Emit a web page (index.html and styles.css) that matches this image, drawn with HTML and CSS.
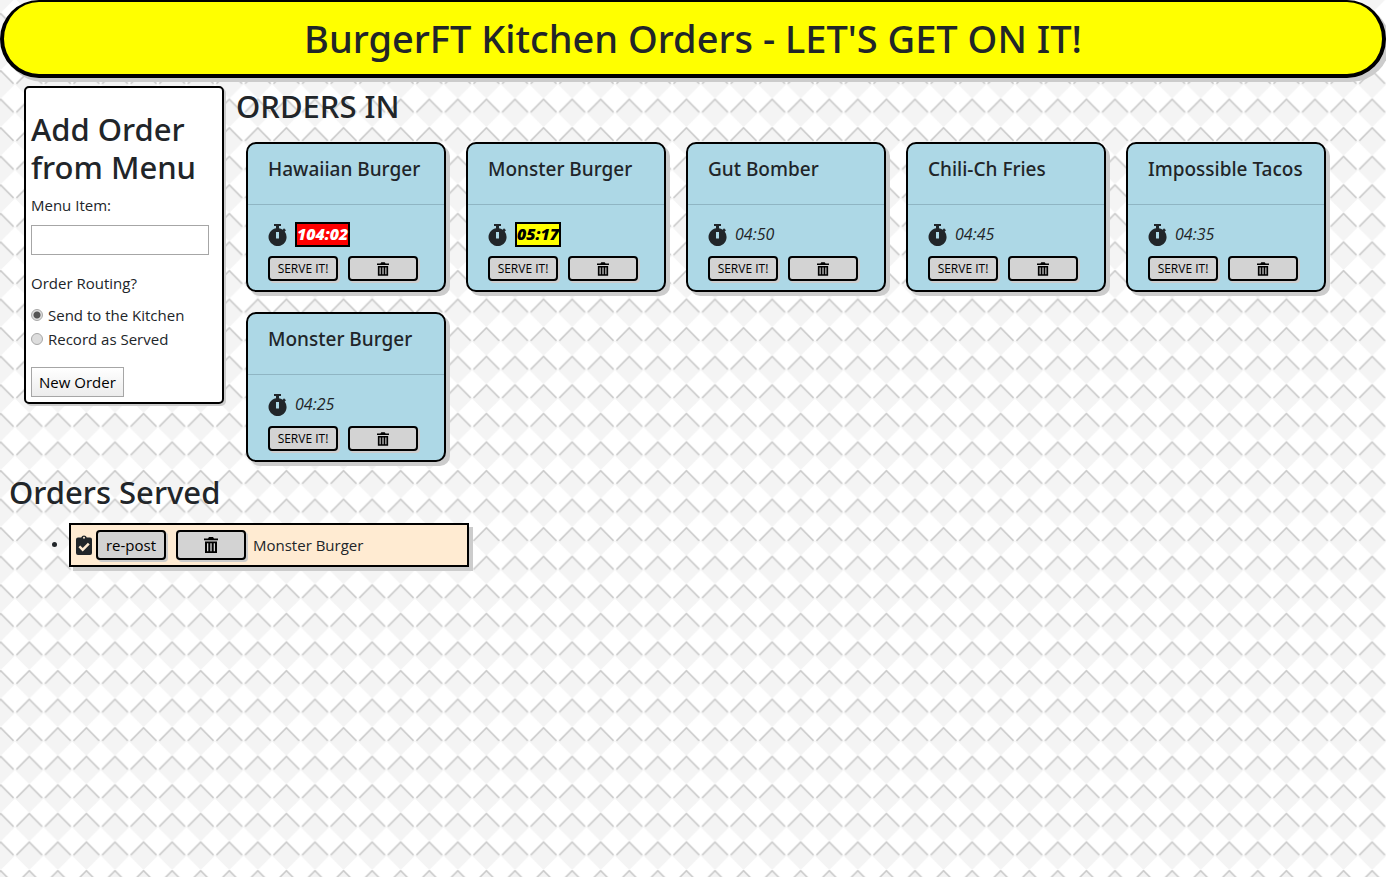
FILE: index.html
```html
<!DOCTYPE html>
<html lang="en">
<head>
<meta charset="utf-8">
<title>BurgerFT Kitchen Orders</title>
<link rel="stylesheet" href="styles.css">
</head>
<body>
<svg class="sprite" aria-hidden="true">
  <symbol id="timer" viewBox="0 0 19 22"><path fill="currentColor" fill-rule="evenodd" d="M6 0h7v2h-2v2.200a9 9 0 0 1 3.700 1.500l1.300-1.500 2 2-1.300 1.400A9 9 0 1 1 8 4.200V2H6zM8 8v6.500h3V8z"/></symbol>
  <symbol id="trash" viewBox="0 0 14 16"><path fill="currentColor" fill-rule="evenodd" d="M0 1.500h4L5 0h4l1 1.500h4v1.800H0zM1 4.500h12V16H1zM3 6.300v7.900h1.300V6.300zM6.300 6.300v7.900h1.400V6.300zM9.700 6.300v7.900H11V6.300z"/></symbol>
  <symbol id="clipboard" viewBox="0 0 16 20"><path fill="currentColor" fill-rule="evenodd" d="M2 2.500h3.200a3 3 0 0 1 5.600 0H14a2 2 0 0 1 2 2V18a2 2 0 0 1-2 2H2a2 2 0 0 1-2-2V4.500a2 2 0 0 1 2-2zM8 1.700a1 1 0 1 0 0 2 1 1 0 0 0 0-2zM4.200 10.500l-1.700 1.800 4.200 4.100 7-6.900-1.800-1.800-5.200 5.200z"/></symbol>
</svg>
<header class="banner"><h1>BurgerFT Kitchen Orders - LET'S GET ON IT!</h1></header>
<main class="kitchen">
  <form class="order-form">
    <h2>Add Order from Menu</h2>
    <label class="field-label" for="item">Menu Item:</label>
    <input class="item-input" id="item" type="text">
    <fieldset class="routing">
      <legend>Order Routing?</legend>
      <label><input type="radio" name="route" checked>Send to the Kitchen</label>
      <label><input type="radio" name="route">Record as Served</label>
    </fieldset>
    <button class="new-order" type="button">New Order</button>
  </form>
  <section class="orders-in">
    <h2>ORDERS IN</h2>
    <div class="cards">
      <article class="card"><h3>Hawaiian Burger</h3><div class="card-body"><p class="clock"><svg class="timer"><use href="#timer"/></svg><em class="late">104:02</em></p><div class="actions"><button type="button">SERVE IT!</button><button type="button" aria-label="Delete"><svg class="trash"><use href="#trash"/></svg></button></div></div></article>
      <article class="card"><h3>Monster Burger</h3><div class="card-body"><p class="clock"><svg class="timer"><use href="#timer"/></svg><em class="warn">05:17</em></p><div class="actions"><button type="button">SERVE IT!</button><button type="button" aria-label="Delete"><svg class="trash"><use href="#trash"/></svg></button></div></div></article>
      <article class="card"><h3>Gut Bomber</h3><div class="card-body"><p class="clock"><svg class="timer"><use href="#timer"/></svg><em>04:50</em></p><div class="actions"><button type="button">SERVE IT!</button><button type="button" aria-label="Delete"><svg class="trash"><use href="#trash"/></svg></button></div></div></article>
      <article class="card"><h3>Chili-Ch Fries</h3><div class="card-body"><p class="clock"><svg class="timer"><use href="#timer"/></svg><em>04:45</em></p><div class="actions"><button type="button">SERVE IT!</button><button type="button" aria-label="Delete"><svg class="trash"><use href="#trash"/></svg></button></div></div></article>
      <article class="card"><h3>Impossible Tacos</h3><div class="card-body"><p class="clock"><svg class="timer"><use href="#timer"/></svg><em>04:35</em></p><div class="actions"><button type="button">SERVE IT!</button><button type="button" aria-label="Delete"><svg class="trash"><use href="#trash"/></svg></button></div></div></article>
      <article class="card"><h3>Monster Burger</h3><div class="card-body"><p class="clock"><svg class="timer"><use href="#timer"/></svg><em>04:25</em></p><div class="actions"><button type="button">SERVE IT!</button><button type="button" aria-label="Delete"><svg class="trash"><use href="#trash"/></svg></button></div></div></article>
    </div>
  </section>
</main>
<section class="served">
  <h2>Orders Served</h2>
  <ul>
    <li><div class="served-row"><svg class="clipboard"><use href="#clipboard"/></svg><div class="actions large"><button type="button">re-post</button><button type="button" aria-label="Delete"><svg class="trash"><use href="#trash"/></svg></button></div><span>Monster Burger</span></div></li>
  </ul>
</section>
</body>
</html>
```
FILE: styles.css
```css
* { box-sizing: border-box; }
body {
  margin: 0;
  min-height: 100vh;
  color: #212529;
  font: 15px/24px "Open Sans", "Noto Sans", sans-serif;
  background: #fff url("data:image/svg+xml,%3Csvg xmlns='http://www.w3.org/2000/svg' width='200' height='200' viewBox='0 0 280 280'%3E%3Cpattern id='p' x='-19' y='18' width='40' height='40' patternUnits='userSpaceOnUse'%3E%3Cpath d='M20 0L40 20L20 40L0 20Z' fill='%23f4f4f4'/%3E%3Cpath d='M2 19L20 1L38 19' fill='none' stroke='%23cccccc' stroke-width='2.400'/%3E%3C/pattern%3E%3Crect width='280' height='280' fill='url(%23p)'/%3E%3C/svg%3E");
}
h1, h2, h3, p, ul { margin: 0; }
h1, h2, h3 { font-family: "Noto Sans", "Open Sans", sans-serif; font-weight: 500; }
h2 { font-size: 31px; line-height: 38px; }
button, input { font: inherit; color: #000; }
.sprite { display: none; }
.banner {
  padding: 12px 16px;
  background: #ff0;
  border: solid #000;
  border-width: 2px 4px 4px;
  border-radius: 40px;
  box-shadow: 4px 4px #ccc;
  text-align: center;
}
.banner h1 { font-size: 38px; line-height: 48px; }
.kitchen { display: flex; align-items: flex-start; padding: 8px 0 0 24px; gap: 12px; }
.order-form {
  flex: none;
  width: 200px;
  padding: 22px 5px 5px;
  background: #fff;
  border: 2px solid #000;
  border-radius: 5px;
  box-shadow: 2px 2px #ccc;
}
.field-label { display: block; margin: 7px 0 8px; }
.item-input { display: block; width: 178px; height: 30px; padding: 2px; border: 1px solid #a6a6a6; }
.routing { margin: 0; padding: 8px 0 0; border: 0; }
.routing legend { padding: 16px 0 0; }
.routing label { display: flex; align-items: center; gap: 5px; }
.routing input {
  appearance: none;
  width: 12px;
  height: 12px;
  margin: 0;
  border: 1px solid #a8a8a8;
  border-radius: 50%;
  background: #ddd;
}
.routing input:checked { background: radial-gradient(#555 0 3px, #ddd 4px); }
.new-order {
  display: block;
  height: 30px;
  margin-top: 16px;
  padding: 0 7px;
  background: linear-gradient(#fff, #ececec);
  border: 1px solid #a6a6a6;
}
.orders-in { flex: 1; padding-top: 1px; }
.cards { display: flex; flex-wrap: wrap; gap: 20px; padding: 17px 10px 0; }
.card {
  width: 200px;
  background: #add8e6;
  border: 2px solid #000;
  border-radius: 10px;
  box-shadow: 4px 4px #ccc;
}
.card h3 {
  padding: 13px 20px 23px;
  font-size: 19px;
  line-height: 24px;
  white-space: nowrap;
  border-bottom: 1px solid #8fb5c3;
}
.card-body { padding: 17px 20px 9px; }
.clock { display: flex; align-items: center; gap: 8px; height: 25px; font-size: 16px; }
.clock em { line-height: 21px; }
.late, .warn { border: 2px solid #000; font-weight: 800; }
.late { background: #f00; color: #fff; }
.warn { background: #ff0; color: #000; }
.timer { width: 19px; height: 22px; }
.actions { display: flex; gap: 10px; margin-top: 9px; }
.actions button {
  display: flex;
  align-items: center;
  justify-content: center;
  width: 70px;
  height: 25px;
  padding: 0;
  font-size: 12px;
  background: #d3d3d3;
  border: 2px solid #000;
  border-radius: 4px;
  box-shadow: 2px 2px #ccc;
}
.trash { width: 12px; height: 14px; }
.served { padding: 0 9px; margin-top: 11px; }
.served ul { padding: 12px 0 0 60px; }
.served-row {
  display: inline-flex;
  align-items: center;
  vertical-align: middle;
  width: 400px;
  max-width: 100%;
  height: 44px;
  padding: 0 5px;
  background: #ffebd2;
  border: 2px solid #000;
  box-shadow: 4px 4px #ccc;
}
.clipboard { width: 16px; height: 20px; margin-right: 4px; }
.large { margin: 0 7px 0 0; }
.large button { height: 30px; font-size: 15px; }
.large .trash { width: 14px; height: 16px; }
```
